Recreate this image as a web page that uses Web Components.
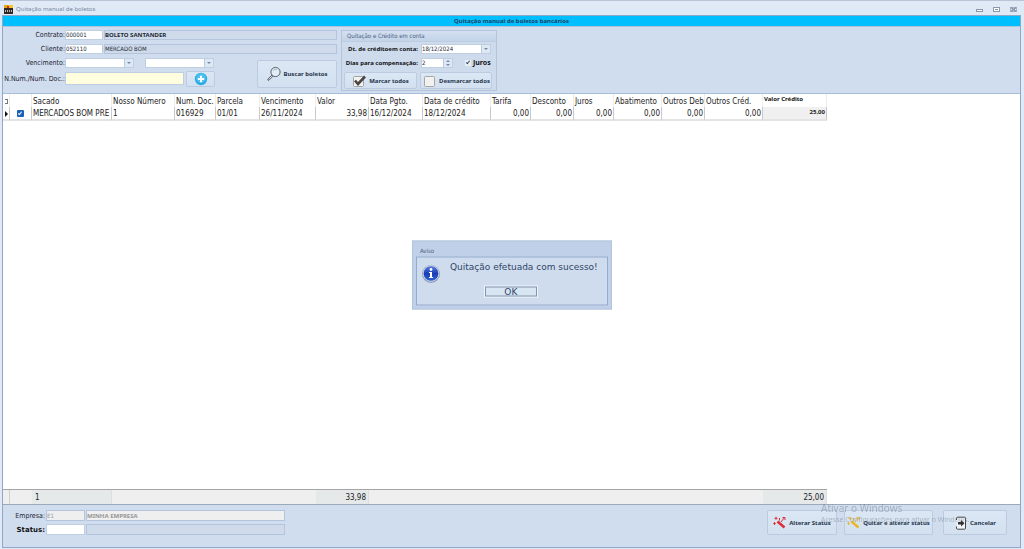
<!DOCTYPE html>
<html lang="pt-BR">
<head>
<meta charset="utf-8">
<title>Quitação manual de boletos</title>
<style>
  :root {
    --ui: "DejaVu Sans Condensed", "Noto Sans", sans-serif;
    --wide: "DejaVu Sans", sans-serif;
    --bold: "Noto Sans", "Open Sans", sans-serif;
    --panel: #d0ddee;
    --line: #b3c4dc;
    --edge: #8fa8c8;
  }
  body { margin: 0; font-family: var(--ui); font-size: 7px; color: #1c2430; }
</style>
</head>
<body>
<app-window></app-window>

<script>
const define = (name, html, setup) => {
  const tpl = document.createElement('template');
  tpl.innerHTML = html;
  customElements.define(name, class extends HTMLElement {
    constructor() {
      super();
      this.attachShadow({ mode: 'open' }).append(tpl.content.cloneNode(true));
    }
    connectedCallback() { if (setup) setup(this, this.shadowRoot); }
  });
};

const wand = color => `<svg viewBox="0 0 14 14" width="14" height="14" stroke="${color}" fill="none"><path d="M4.500 5.500 11.500 11.500" stroke-width="2.600"/><path d="M3 .8v3M1.500 2.300h3M6.500 2v2.500M1.500 6v3M.3 7.500h2.500M8 6l3.500-4.500M9.500 1.500h2.500v2.500" stroke-width="1"/></svg>`;
const icons = {
  search: `<svg viewBox="0 0 16 16" width="16" height="16" fill="none" stroke="#4a525e"><circle cx="9.500" cy="6" r="4.600" fill="#e3edf7" stroke-width=".9"/><path d="M7 4.500q1.500-2 4-1" stroke="#8d98a6" stroke-width=".7"/><path d="M6 9 1.800 13.200q-.3 1.500 1.200 1L7.200 10" stroke-width=".9"/></svg>`,
  plus: `<svg viewBox="0 0 14 14" width="14" height="14"><circle cx="7" cy="7" r="6.200" fill="#28ace4"/><circle cx="7" cy="6" r="4.800" fill="#4cc0ee"/><path d="M7 3.800v6.400M3.800 7h6.400" stroke="#fff" stroke-width="2"/></svg>`,
  checked: `<svg viewBox="0 0 14 14" width="14" height="14"><rect x="1.500" y="2.500" width="10" height="10" rx="1" fill="#f2f2f2" stroke="#a3a3a3"/><path d="M3 6.500 6 10 13 2.500" fill="none" stroke="#4a4542" stroke-width="2.600"/></svg>`,
  empty: `<svg viewBox="0 0 14 14" width="14" height="14"><rect x="2.500" y="2.500" width="10" height="10" rx="1" fill="#f1f1f0" stroke="#a6a6a6"/></svg>`,
  wandRed: wand('#dc3038'),
  wandGold: wand('#e9b92c'),
  exit: `<svg viewBox="0 0 14 14" width="14" height="14"><path d="M2.500 4V2.200q0-1 1-1h7q1 0 1 1v10q0 1-1 1h-7q-1 0-1-1V10.500" fill="#f0f5fa" stroke="#444" stroke-width="1"/><path d="M4 6h3V4L10.500 7.200 7 10.400V8.400H4z" fill="#333"/></svg>`
};

/* Labelled text box, drop-down or spinner */
define('form-field', `
<style>
  :host { display: flex; align-items: center; height: 10px; min-width: 0; }
  label { flex: none; width: var(--label, auto); text-align: right; white-space: nowrap; }
  :host([bold]) label { font: bold var(--label-size, 6px)/10px var(--label-font, var(--bold)); color: #111; }
  .box { flex: 1; display: flex; height: 100%; min-width: 0; box-sizing: border-box; border: 1px solid #c0cee2; background: #fff; }
  input { flex: 1; min-width: 0; width: 0; border: 0; padding: 0; margin: 0; background: none; font: var(--weight, normal) 6px/8px var(--value-font, var(--ui)); color: #222b36; outline: 0; }
  :host([readonly]) .box { background: #cfdbeb; border-color: var(--line); }
  :host([dim]) .box { background: #efefef; }
  :host([dim]) input { color: #969696; }
  :host([yellow]) .box { background: #ffffdf; }
  .arrow { display: none; width: 9px; padding: 0; border: 0; border-left: 1px solid #b9c9de; background: #dde8f4; align-items: center; justify-content: center; flex-direction: column; gap: 2px; }
  :host([kind]) .arrow { display: flex; }
  .arrow i { border: solid transparent; border-width: 2px 2px 0; border-top-color: #7489a6; }
  .arrow .up { display: none; transform: rotate(180deg); }
  :host([kind=spin]) .arrow .up { display: block; }
</style>
<label for="f"></label>
<span class="box"><input id="f"><button class="arrow" type="button" tabindex="-1" aria-label="Abrir"><i class="up"></i><i></i></button></span>`,
(el, root) => {
  const label = root.querySelector('label');
  const input = root.querySelector('input');
  label.textContent = el.getAttribute('label') || '';
  if (!label.textContent) { label.remove(); input.setAttribute('aria-label', el.getAttribute('name') || ''); }
  input.value = el.getAttribute('value') || '';
  input.readOnly = el.hasAttribute('readonly');
});

define('tool-button', `
<style>
  :host { display: block; }
  button { display: flex; align-items: center; justify-content: center; gap: var(--gap, 2px); width: 100%; height: 100%; box-sizing: border-box; margin: 0; padding: 0 2px; border: 1px solid #bccbe0; border-radius: 2px; background: linear-gradient(#dbe7f4, #d2e0f0); font: bold 6px/10px var(--bold); color: #26364c; white-space: nowrap; }
  svg { display: block; flex: none; }
</style>
<button type="button"><span class="icon"></span><slot></slot></button>`,
(el, root) => {
  root.querySelector('.icon').innerHTML = icons[el.getAttribute('icon')];
  if (!el.textContent) root.querySelector('button').setAttribute('aria-label', 'Adicionar');
});

define('title-bar', `
<style>
  :host { display: flex; align-items: center; height: 15px; padding: 0 6px 0 4px; box-sizing: border-box; border-top: 1px solid #b7c5d7; color: #7788a4; gap: 3px; }
  h1 { flex: 1; margin: 0; padding-top: 3px; font: 6px/9px var(--bold); }
  svg { display: block; margin-top: 3px; }
  nav { display: flex; gap: 8px; }
  button { border: 0; padding: 0; background: none; }
</style>
<svg width="9" height="9" viewBox="0 0 9 9" aria-hidden="true"><path d="M0 0h9v9H0z" fill="#332725"/><path d="M0 0h4v3H0z" fill="#e9a41b"/><path d="M4 0h5v3H4z" fill="#f3c62b"/><path d="M3 1h2v2H3z" fill="#be3827"/><path d="M1 6h1m1 0h1m1 0h1m1 0h1" stroke="#bbb" stroke-width="2"/></svg>
<h1>Quitação manual de boletos</h1>
<nav>
<button aria-label="Minimizar"><svg width="9" height="7" fill="#fff" stroke="#8c98aa"><rect x="1.500" y="3.500" width="6" height="2"/></svg></button>
<button aria-label="Maximizar"><svg width="9" height="7" fill="#fff" stroke="#8c98aa"><rect x="1.500" y="1.500" width="6" height="4"/><path d="M3 3.500h3"/></svg></button>
<button aria-label="Fechar"><svg width="9" height="7" fill="none" stroke="#8490a2"><path d="M2 1.500l5 4m0-4l-5 4" stroke-width="1.400"/><path d="M1.500 1v5m6-5v5M1.500 1.500h6m-6 4h6" stroke-width=".6"/></svg></button>
</nav>`);

define('credit-group', `
<style>
  :host { display: flex; flex-direction: column; box-sizing: border-box; width: 156px; height: 61px; border: 1px solid var(--line); background: #cddbed; }
  h2 { margin: 0; padding-left: 5px; height: 10px; font: 6px/10px var(--ui); color: #49607f; background: linear-gradient(#d3e0f0, #c3d3e8); border-bottom: 1px solid #bccce1; }
  .body { display: grid; gap: 4px; padding: 2px 1px; }
  .row { display: flex; align-items: center; }
  form-field { --label: 75px; gap: 3px; }
  .date { width: 148px; }
  .days { width: 110px; }
  .check { display: flex; align-items: center; gap: 2px; margin-left: 12px; font: bold 7px/10px var(--bold); color: #111; }
  .check input { appearance: none; width: 6px; height: 6px; margin: 0; background: #e8eff8; position: relative; }
  .check input:checked::after { content: ""; position: absolute; left: 2px; top: 0; width: 1px; height: 3px; border: solid #35465e; border-width: 0 1px 1px 0; transform: rotate(40deg); }
  .actions { display: grid; grid-template-columns: 73px 72px; gap: 3px; padding-left: 1px; }
  .actions tool-button { height: 17px; --gap: 3px; }
</style>
<h2>Quitação e Crédito em conta</h2>
<div class="body">
  <form-field bold class="date" label="Dt. de créditoem conta:" value="18/12/2024" kind="drop"></form-field>
  <div class="row"><form-field bold class="days" label="Dias para compensação:" value="2" kind="spin"></form-field>
  <label class="check"><input type="checkbox" checked>Juros</label></div>
  <div class="actions"><tool-button icon="checked">Marcar todos</tool-button><tool-button icon="empty">Desmarcar todos</tool-button></div>
</div>`);

define('filter-panel', `
<style>
  :host { display: flex; gap: 4px; padding: 3px 2px 3px 0; height: 68px; box-sizing: border-box; background: var(--panel); border-top: 1px solid var(--line); border-bottom: 1px solid #a9bdd8; }
  form { position: relative; width: 334px; display: grid; align-content: start; gap: 4px; margin: 0; }
  .row { display: flex; gap: 1px; }
  form-field { --label: 62px; }
  .code { width: 100px; }
  .name { flex: 1; }
  .strong { --weight: bold; --value-font: var(--bold); }
  .period { gap: 11px; }
  .from { width: 131px; }
  .to { width: 69px; }
  .bottom { gap: 2px; }
  .doc { width: 181px; height: 13px; }
  .add { width: 29px; height: 16px; margin-top: -1px; }
  .lower { display: flex; justify-content: space-between; }
  .stack { display: grid; align-content: start; gap: 4px; }
  .search { width: 80px; height: 28px; margin-top: 2px; --gap: 1px; }
</style>
<form>
  <div class="row"><form-field class="code" label="Contrato:" value="000001"></form-field><form-field class="name strong" name="Nome do contrato" readonly value="BOLETO SANTANDER"></form-field></div>
  <div class="row"><form-field class="code" label="Cliente:" value="052110"></form-field><form-field class="name" name="Nome do cliente" readonly value="MERCADO BOM"></form-field></div>
  <div class="lower">
    <div class="stack">
      <div class="row period"><form-field class="from" label="Vencimento:" kind="drop"></form-field><form-field class="to" name="Vencimento final" kind="drop"></form-field></div>
      <div class="row bottom"><form-field class="doc" label="N.Num./Num. Doc.:" yellow></form-field><tool-button class="add" icon="plus"></tool-button></div>
    </div>
    <tool-button class="search" icon="search">Buscar boletos</tool-button>
  </div>
</form>
<credit-group></credit-group>`);

const widths = [7, 22, 80, 63, 41, 44, 56, 53, 54, 68, 40, 43, 40, 48, 43, 58, 64];
const cols = '<colgroup>' + widths.map(w => `<col style="width:${w}px">`).join('') + '</colgroup>';
const heads = ['', '', 'Sacado', 'Nosso Número', 'Num. Doc.', 'Parcela', 'Vencimento', 'Valor', 'Data Pgto.', 'Data de crédito', 'Tarifa', 'Desconto', 'Juros', 'Abatimento', 'Outros Deb', 'Outros Créd.', 'Valor Crédito'];
const values = ['MERCADOS BOM PRE', '1', '016929', '01/01', '26/11/2024', '33,98', '16/12/2024', '18/12/2024', '0,00', '0,00', '0,00', '0,00', '0,00', '0,00', '25,00'];
const totals = { 2: '1', 7: '33,98', 16: '25,00' };

define('data-grid', `
<style>
  :host { flex: 1; display: flex; flex-direction: column; justify-content: space-between; background: #fff; color: #222; }
  table { table-layout: fixed; border-collapse: separate; border-spacing: 0; width: 824px; font: 8px/11px var(--ui); }
  th, td { padding: 0 1px; box-sizing: border-box; overflow: hidden; white-space: nowrap; text-align: left; font-weight: normal; }
  th { height: 13px; padding: 1px 0 0 1px; border-right: 1px solid #ededed; }
  th.last { font: bold 6px/9px var(--bold); color: #111; vertical-align: top; }
  .rows td { height: 14px; padding-top: 1px; border-right: 1px solid #c9c9c9; border-bottom: 2px solid #e4e4e4; }
  .num { text-align: right; }
  .rows td:last-child { background: #f0f0f0; font: bold 6px/9px var(--bold); vertical-align: top; color: #222; }
  .rows td:first-child { padding: 1px 0 0 2px; }
  .cur { display: block; width: 0; border: solid transparent; border-width: 3px 0 3px 3px; border-left-color: #111; }
  .tick input { appearance: none; display: block; width: 7px; height: 7px; margin: 0 auto; border-radius: 1px; background: #1a62ba; position: relative; }
  .tick input::after { content: ""; position: absolute; left: 2px; top: 1px; width: 1px; height: 3px; border: solid #fff; border-width: 0 1px 1px 0; transform: rotate(40deg); }
  .marker { display: block; width: 3px; height: 5px; box-sizing: border-box; margin-left: 1px; border: 1px solid #777; border-left: 0; }
  .totals { background: #efefef; border-top: 1px solid #a5a5a5; }
  .totals td { height: 14px; padding: 1px 2px 0 3px; }
  .totals td:first-child { border-right: 1px solid #cfcfcf; }
  .totals .sum { background: #e5e9ea; border-right: 1px solid #dedede; }
</style>
<table>${cols}
<thead><tr>${heads.map((h, i) => `<th${i === 16 ? ' class="last"' : ''}>${i ? h : '<span class="marker"></span>'}</th>`).join('')}</tr></thead>
<tbody class="rows"><tr><td><span class="cur"></span></td><td class="tick"><input type="checkbox" checked aria-label="Selecionar boleto"></td>${values.map(v => `<td${v.includes(',') ? ' class="num"' : ''}>${v}</td>`).join('')}</tr></tbody>
</table>
<table class="totals">${cols}<tbody><tr>${widths.map((w, i) => `<td class="${totals[i] ? 'sum' : ''}${i > 2 ? ' num' : ''}">${totals[i] || ''}</td>`).join('')}</tr></tbody></table>`);

define('status-footer', `
<style>
  :host { display: flex; justify-content: space-between; height: 43px; box-sizing: border-box; padding: 5px 13px 0 0; background: var(--panel); border-top: 1px solid #9aaabd; }
  .fields { display: grid; align-content: start; gap: 3px; width: 282px; }
  .row { display: flex; gap: 1px; }
  form-field { --label: 42px; gap: 1px; height: 11px; }
  .code { width: 82px; }
  .name { flex: 1; }
  .strong { --weight: bold; --value-font: var(--bold); }
  .status { --label-size: 7px; --label-font: var(--wide); }
  .buttons { display: flex; gap: 7px; }
  .buttons tool-button { height: 25px; --gap: 2px; }
  .a { width: 70px; } .b { width: 89px; } .c { width: 64px; margin-left: 3px; }
</style>
<div class="fields">
  <div class="row"><form-field class="code" label="Empresa:" value="E1" readonly dim></form-field><form-field class="name strong" name="Nome da empresa" value="MINHA EMPRESA" readonly dim></form-field></div>
  <div class="row"><form-field class="code status" bold label="Status:"></form-field><form-field class="name" name="Descrição do status" readonly></form-field></div>
</div>
<div class="buttons"><tool-button class="a" icon="wandRed">Alterar Status</tool-button><tool-button class="b" icon="wandGold">Quitar e alterar status</tool-button><tool-button class="c" icon="exit">Cancelar</tool-button></div>`);

define('alert-dialog', `
<style>
  :host { position: fixed; left: 50%; top: 50%; transform: translate(-50%, -50%); display: block; width: 200px; height: 69px; box-sizing: border-box; padding: 0 3px 3px; border: 1px solid #b4c6de; background: #bfd0e8; }
  h2 { margin: 0; padding: 3px 0 0 4px; height: 15px; box-sizing: border-box; font: 6px/11px var(--ui); color: #4c6180; }
  .body { display: flex; height: 49px; box-sizing: border-box; border: 1px solid #93abcd; background: #cfdcee; padding: 4px 5px; gap: 10px; }
  svg { flex: none; margin-top: 2px; }
  .msg { display: grid; justify-items: center; align-content: start; gap: 13px; }
  p { margin: 0; font: 9px/11px var(--wide); color: #304667; white-space: nowrap; }
  button { width: 54px; height: 12px; margin-right: 26px; padding: 0; font: 9px/8px var(--wide); color: #304667; background: #d8e5f3; border: 1px solid #eef4fa; outline: 1px solid #8495ad; outline-offset: -2px; }
</style>
<h2>Aviso</h2>
<div class="body">
  <svg width="18" height="20" viewBox="0 0 18 20" aria-hidden="true"><defs><linearGradient id="g" x2="0" y2="1"><stop stop-color="#5c83e2"/><stop offset=".5" stop-color="#1a3cb4"/><stop offset="1" stop-color="#2f68dc"/></linearGradient></defs><ellipse cx="9" cy="10.500" rx="9" ry="9" fill="#8f9fbb"/><circle cx="9" cy="10" r="7.800" fill="url(#g)" stroke="#c9d2e2"/><circle cx="9" cy="6" r="1.400" fill="#fff"/><path d="M7 8.500h3v5h1v1H7v-1h1v-4H7z" fill="#fff"/></svg>
  <div class="msg"><p>Quitação efetuada com sucesso!</p><button type="button">OK</button></div>
</div>`);

define('activation-mark', `
<style>
  :host { position: fixed; right: 44px; bottom: 24px; display: block; width: 159px; pointer-events: none; color: rgba(110, 120, 132, .45); font: 7px/10px "Noto Sans", sans-serif; white-space: nowrap; }
  strong { display: block; font: 10px/13px "Noto Sans", sans-serif; }
</style>
<strong>Ativar o Windows</strong><span>Acesse Configurações para ativar o Windows.</span>`);

define('app-window', `
<style>
  :host { display: flex; flex-direction: column; min-height: 100vh; box-sizing: border-box; background: #dfeaf6; }
  main { flex: 1; display: flex; flex-direction: column; margin: 0 3px 1px 2px; border: 1px solid var(--edge); }
  .banner { height: 10px; background: #00bfff; font: bold 6px/10px var(--bold); text-align: center; color: #1d4468; }
</style>
<title-bar></title-bar>
<main><div class="banner">Quitação manual de boletos bancários</div><filter-panel></filter-panel><data-grid></data-grid><status-footer></status-footer></main>
<alert-dialog role="alertdialog"></alert-dialog>
<activation-mark></activation-mark>`);
</script>
</body>
</html>
